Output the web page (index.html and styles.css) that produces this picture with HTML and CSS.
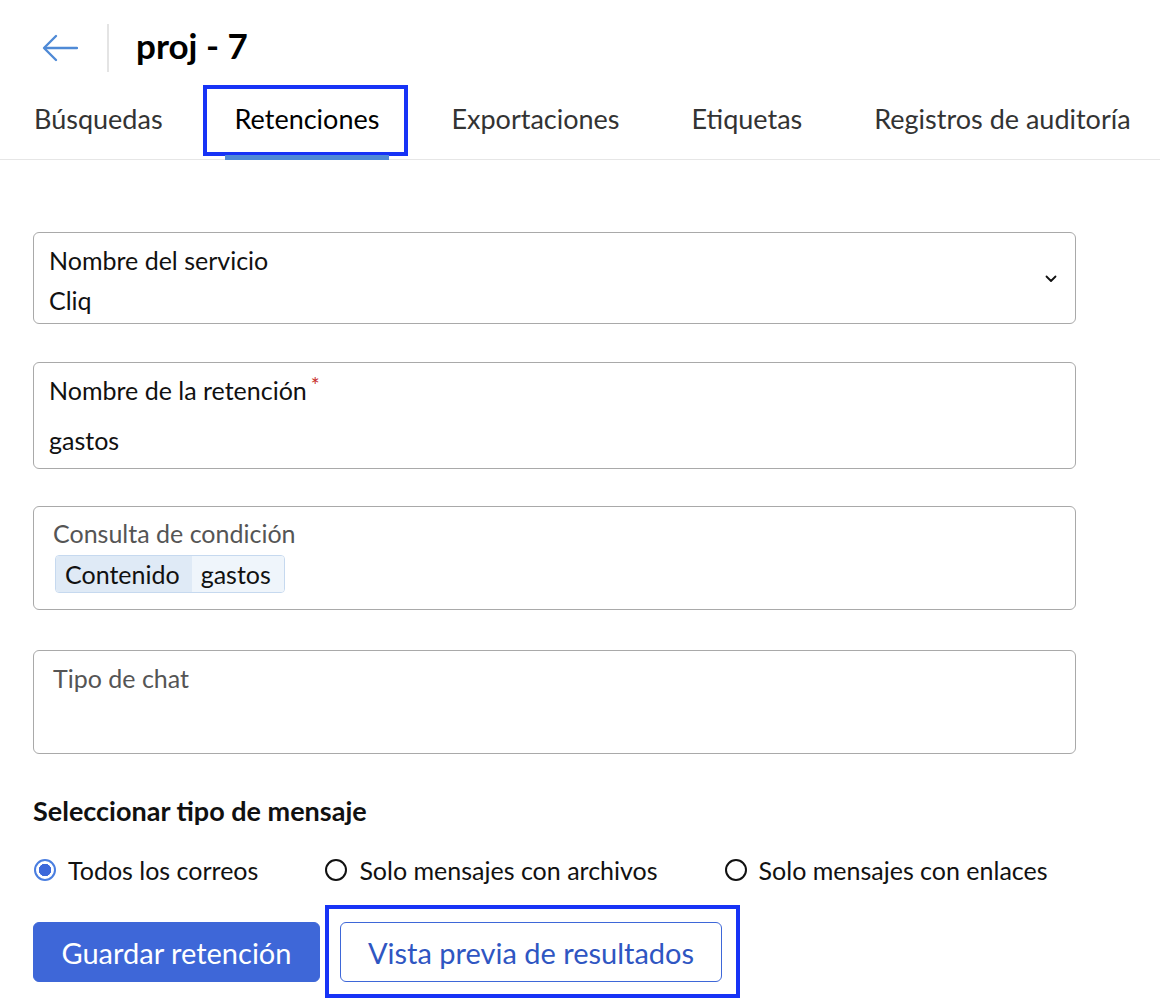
FILE: index.html
```html
<!DOCTYPE html>
<html lang="es">
<head>
<meta charset="utf-8">
<title>proj - 7 · Retenciones</title>
<link rel="stylesheet" href="styles.css">
</head>
<body>
  <header class="topbar">
    <button class="back" aria-label="Volver">
      <svg width="36" height="28" viewBox="0 0 36 28" fill="none" stroke="#4f8ad6" stroke-width="2.4" stroke-linecap="round" stroke-linejoin="round">
        <path d="M35 14H3"/>
        <path d="M14 2L2 14L14 26"/>
      </svg>
    </button>
    <span class="divider"></span>
    <h1 class="title">proj - 7</h1>
  </header>

  <nav class="tabs">
    <a class="tab">Búsquedas</a>
    <a class="tab active marked">Retenciones</a>
    <a class="tab">Exportaciones</a>
    <a class="tab">Etiquetas</a>
    <a class="tab">Registros de auditoría</a>
  </nav>

  <main class="form">
    <div class="field select">
      <div class="field-label">Nombre del servicio</div>
      <div class="field-value">Cliq</div>
      <svg class="chevron" width="12" height="8" viewBox="0 0 12 8" fill="none" stroke="#111" stroke-width="1.8" stroke-linecap="round" stroke-linejoin="round">
        <path d="M1.5 1.5L6 6L10.5 1.5"/>
      </svg>
    </div>

    <div class="field name">
      <div class="field-label">Nombre de la retención<span class="req">*</span></div>
      <div class="field-value spaced">gastos</div>
    </div>

    <div class="field query">
      <div class="field-label muted">Consulta de condición</div>
      <div class="chip">
        <span class="chip-key">Contenido</span>
        <span class="chip-val">gastos</span>
      </div>
    </div>

    <div class="field chat">
      <div class="field-label muted">Tipo de chat</div>
    </div>

    <h2 class="section-title">Seleccionar tipo de mensaje</h2>

    <div class="radios">
      <label class="radio checked"><span class="dot"></span>Todos los correos</label>
      <label class="radio"><span class="dot"></span>Solo mensajes con archivos</label>
      <label class="radio"><span class="dot"></span>Solo mensajes con enlaces</label>
    </div>

    <div class="actions">
      <button class="btn primary">Guardar retención</button>
      <div class="btn-frame">
        <button class="btn outline">Vista previa de resultados</button>
      </div>
    </div>
  </main>
</body>
</html>
```

FILE: styles.css
```css
* {
  box-sizing: border-box;
}

body {
  margin: 0;
  padding-bottom: 24px;
  background: #fff;
  color: #111;
  font-family: Lato, "Open Sans", sans-serif;
}

/* header with back arrow and project title */
.topbar {
  display: flex;
  align-items: center;
  height: 72px;
  padding: 24px 0 0 42px;
}

.back {
  display: flex;
  align-items: center;
  padding: 0;
  border: 0;
  background: none;
  margin-right: 29px;
}

.divider {
  width: 2px;
  height: 48px;
  background: #e4e4e4;
  margin-right: 27px;
}

.title {
  margin: 0;
  font-size: 35px;
  font-weight: 700;
  line-height: 48px;
  color: #000;
  position: relative;
  top: -3px;
}

/* tab strip */
.tabs {
  display: flex;
  gap: 52px;
  padding-left: 24px;
  border-bottom: 1px solid #e6e6e6;
  height: 88px;
}

.tab {
  position: relative;
  padding: 30px 10px 0;
  font-size: 27px;
  line-height: 34px;
  color: #333;
  white-space: nowrap;
}

.tab.active {
  color: #000;
}

.tab.active::after {
  content: "";
  position: absolute;
  left: 0;
  right: 0;
  bottom: -1px;
  height: 5px;
  background: #4f8ad6;
}

/* highlight frame around the active tab */
.tab.marked::before {
  content: "";
  position: absolute;
  left: -22px;
  right: -19px;
  top: 13px;
  height: 63px;
  border: 4px solid #1733f6;
}

/* form */
.form {
  padding: 72px 0 0 33px;
  width: 1076px;
}

.field {
  position: relative;
  border: 1px solid #a9a9a9;
  border-radius: 6px;
  padding: 7px 15px 3px;
}

.field-label {
  font-size: 25px;
  line-height: 40px;
  color: #111;
}

.field-label.muted {
  color: #555;
}

.req {
  color: #c8302b;
  font-size: 21px;
  vertical-align: top;
  line-height: 30px;
  margin-left: 4px;
}

.field-value {
  font-size: 25px;
  line-height: 40px;
  color: #111;
}

.field-value.spaced {
  margin-top: 10px;
}

.select {
  height: 92px;
}

.chevron {
  position: absolute;
  right: 18px;
  top: 42px;
}

.name {
  margin-top: 38px;
  height: 107px;
}

.query {
  margin-top: 37px;
  height: 104px;
  padding: 6px 19px 0;
}

.chip {
  display: inline-flex;
  margin: 2px 0 0 2px;
  height: 38px;
  border: 1px solid #c6d9ef;
  border-radius: 4px;
  overflow: hidden;
  font-size: 25px;
  line-height: 36px;
  color: #111;
}

.chip-key {
  background: #dfeaf6;
  padding: 0 12px 0 9px;
}

.chip-val {
  background: #eff5fb;
  padding: 0 13px 0 9px;
}

.chat {
  margin-top: 40px;
  height: 104px;
  padding: 7px 19px 0;
}

.section-title {
  margin: 41px 0 0;
  font-size: 27px;
  font-weight: 700;
  line-height: 32px;
  color: #111;
}

/* message type radios */
.radios {
  display: flex;
  gap: 66px;
  margin-top: 27px;
  height: 32px;
  align-items: center;
}

.radio {
  display: flex;
  align-items: center;
  font-size: 25px;
  line-height: 32px;
  color: #111;
  white-space: nowrap;
}

.dot {
  width: 22px;
  height: 22px;
  border: 2px solid #111;
  border-radius: 50%;
  margin: 0 12px 0 1px;
  flex: none;
}

.radio.checked .dot {
  border-color: #4a7ee0;
  background: radial-gradient(circle, #3c68da 0 6px, #fff 6.5px);
}

/* buttons */
.actions {
  display: flex;
  gap: 20px;
  margin-top: 36px;
}

.btn {
  height: 60px;
  border-radius: 6px;
  font-family: inherit;
  font-size: 29px;
  padding: 0;
}

.btn.primary {
  background: #3e67d8;
  border: 1px solid #3e67d8;
  color: #fff;
  width: 287px;
}

.btn.outline {
  display: block;
  background: #fff;
  border: 1px solid #3e67d8;
  color: #2f56c2;
  width: 382px;
}

/* highlight frame around the preview button */
.btn-frame {
  position: relative;
}

.btn-frame::before {
  content: "";
  position: absolute;
  left: -15px;
  right: -18px;
  top: -17px;
  bottom: -16px;
  border: 4px solid #1733f6;
  pointer-events: none;
}
```
